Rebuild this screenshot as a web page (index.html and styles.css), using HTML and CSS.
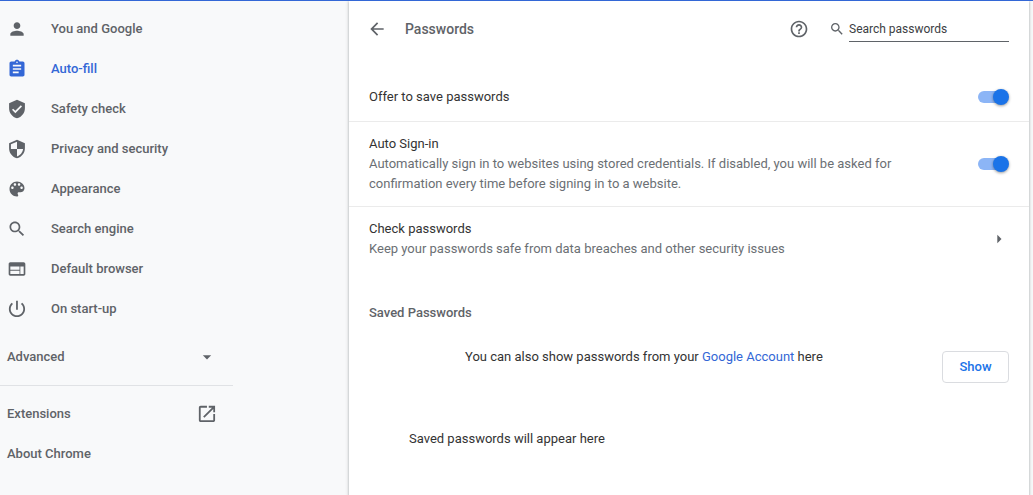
FILE: index.html
```html
<!DOCTYPE html>
<html lang="en-GB">
<head>
  <meta charset="UTF-8">
  <meta name="viewport" content="width=device-width, initial-scale=1.0">
  <title>Settings - Passwords</title>
  <link rel="stylesheet" href="styles.css">
</head>
<body>
  <nav class="sidebar">
    <a class="menu-item" href="#people">
      <svg class="icon" viewBox="0 0 24 24"><path d="M12 12c2.21 0 4-1.79 4-4s-1.79-4-4-4-4 1.79-4 4 1.79 4 4 4zm0 2c-2.67 0-8 1.34-8 4v2h16v-2c0-2.66-5.33-4-8-4z"/></svg>
      You and Google
    </a>
    <a class="menu-item selected" href="#autofill">
      <svg class="icon" viewBox="0 0 24 24"><path d="M19 3h-4.18C14.4 1.84 13.3 1 12 1c-1.3 0-2.4.84-2.82 2H5c-1.1 0-2 .9-2 2v14c0 1.1.9 2 2 2h14c1.1 0 2-.9 2-2V5c0-1.1-.9-2-2-2zm-7 0c.55 0 1 .45 1 1s-.45 1-1 1-1-.45-1-1 .45-1 1-1zm2 14H7v-2h7v2zm3-4H7v-2h10v2zm0-4H7V7h10v2z"/></svg>
      Auto-fill
    </a>
    <a class="menu-item" href="#safety">
      <svg class="icon" viewBox="0 0 24 24"><path d="M12 1L2.5 5v6c0 5.6 3.9 10.7 9.5 12 5.6-1.3 9.5-6.4 9.5-12V5L12 1zm-2 16l-4-4 1.41-1.41L10 14.17l6.59-6.59L18 9l-8 8z"/></svg>
      Safety check
    </a>
    <a class="menu-item" href="#privacy">
      <svg class="icon" viewBox="0 0 24 24"><path d="M12 1L2.5 5v6c0 5.6 3.9 10.7 9.5 12 5.6-1.3 9.5-6.4 9.5-12V5L12 1zm0 11h7.3c-.5 4.1-3.5 7.8-7.3 8.900V12H4.700V6.300L12 3.200V12z"/></svg>
      Privacy and security
    </a>
    <a class="menu-item" href="#appearance">
      <svg class="icon" viewBox="0 0 24 24"><path d="M12 3c-4.970 0-9 4.030-9 9s4.030 9 9 9c.83 0 1.500-.67 1.500-1.500 0-.39-.15-.74-.39-1.010-.23-.26-.38-.61-.38-.99 0-.83.67-1.500 1.500-1.500H16c2.760 0 5-2.240 5-5 0-4.420-4.030-8-9-8zm-5.500 9c-.83 0-1.500-.67-1.500-1.500S5.670 9 6.500 9 8 9.670 8 10.500 7.330 12 6.500 12zm3-4C8.670 8 8 7.330 8 6.500S8.670 5 9.500 5s1.500.67 1.500 1.500S10.330 8 9.500 8zm5 0c-.83 0-1.500-.67-1.500-1.500S13.670 5 14.500 5s1.500.67 1.500 1.500S15.330 8 14.500 8zm3 4c-.83 0-1.500-.67-1.500-1.500S16.670 9 17.500 9s1.500.67 1.500 1.500-.67 1.500-1.500 1.500z"/></svg>
      Appearance
    </a>
    <a class="menu-item" href="#search">
      <svg class="icon" viewBox="0 0 24 24"><path d="M15.5 14h-.79l-.28-.27C15.41 12.59 16 11.11 16 9.5 16 5.91 13.09 3 9.5 3S3 5.91 3 9.5 5.91 16 9.5 16c1.61 0 3.09-.59 4.23-1.57l.27.28v.79l5 4.99L20.49 19l-4.99-5zm-6 0C7.01 14 5 11.99 5 9.5S7.01 5 9.5 5 14 7.01 14 9.5 11.99 14 9.5 14z"/></svg>
      Search engine
    </a>
    <a class="menu-item" href="#browser">
      <svg class="icon" viewBox="0 0 24 24"><path d="M20 4H4c-1.1 0-1.99.9-1.99 2L2 18c0 1.1.9 2 2 2h16c1.1 0 2-.9 2-2V6c0-1.1-.9-2-2-2zm-5 14H4v-4h11v4zm0-5H4V9h11v4zm5 5h-4V9h4v9z"/></svg>
      Default browser
    </a>
    <a class="menu-item" href="#startup">
      <svg class="icon" viewBox="0 0 24 24"><path d="M13 3h-2v10h2V3zm4.83 2.17l-1.42 1.42C17.99 7.86 19 9.81 19 12c0 3.87-3.13 7-7 7s-7-3.13-7-7c0-2.19 1.01-4.14 2.58-5.42L6.17 5.17C4.23 6.82 3 9.26 3 12c0 4.97 4.03 9 9 9s9-4.03 9-9c0-2.74-1.23-5.18-3.17-6.83z" transform="translate(-1 -1) scale(1.08)"/></svg>
      On start-up
    </a>
    <button class="menu-item advanced" type="button">
      Advanced
      <svg class="icon" viewBox="0 0 24 24"><path d="M7 10l5 5 5-5z"/></svg>
    </button>
    <hr class="separator">
    <a class="menu-item spread" href="#extensions">
      Extensions
      <svg class="icon" viewBox="0 0 24 24"><path d="M19 19H5V5h7V3H5c-1.11 0-2 .9-2 2v14c0 1.1.89 2 2 2h14c1.1 0 2-.9 2-2v-7h-2v7zM14 3v2h3.59l-9.83 9.83 1.41 1.41L19 6.41V10h2V3h-7z" transform="translate(-1 -1) scale(1.08)"/></svg>
    </a>
    <a class="menu-item" href="#about">About Chrome</a>
  </nav>

  <main class="content">
    <header class="page-header">
      <button class="icon-button" type="button" aria-label="Back">
        <svg class="icon" viewBox="0 0 24 24"><path d="M20 11H7.83l5.59-5.59L12 4l-8 8 8 8 1.41-1.41L7.83 13H20v-2z"/></svg>
      </button>
      <h1>Passwords</h1>
      <button class="icon-button" type="button" aria-label="Help">
        <svg class="icon" viewBox="0 0 24 24"><path d="M11 18h2v-2h-2v2zm1-16C6.48 2 2 6.48 2 12s4.48 10 10 10 10-4.48 10-10S17.52 2 12 2zm0 18c-4.41 0-8-3.59-8-8s3.59-8 8-8 8 3.59 8 8-3.59 8-8 8zm0-14c-2.21 0-4 1.79-4 4h2c0-1.1.9-2 2-2s2 .9 2 2c0 2-3 1.75-3 5h2c0-2.25 3-2.5 3-5 0-2.21-1.79-4-4-4z"/></svg>
      </button>
      <div class="search">
        <svg class="icon small" viewBox="0 0 24 24"><path d="M15.5 14h-.79l-.28-.27C15.41 12.59 16 11.11 16 9.5 16 5.91 13.09 3 9.5 3S3 5.91 3 9.5 5.91 16 9.5 16c1.61 0 3.09-.59 4.23-1.57l.27.28v.79l5 4.99L20.49 19l-4.99-5zm-6 0C7.01 14 5 11.99 5 9.5S7.01 5 9.5 5 14 7.01 14 9.5 11.99 14 9.5 14z"/></svg>
        <input type="text" placeholder="Search passwords" aria-label="Search passwords">
      </div>
    </header>

    <div class="row">
      <label class="row-text" for="offerSave">Offer to save passwords</label>
      <input class="toggle" type="checkbox" id="offerSave" checked>
    </div>
    <div class="row">
      <label class="row-text" for="autoSignin">
        Auto Sign-in
        <span class="secondary">Automatically sign in to websites using stored credentials. If disabled, you will be asked for confirmation every time before signing in to a website.</span>
      </label>
      <input class="toggle" type="checkbox" id="autoSignin" checked>
    </div>
    <a class="row" href="#check">
      <span class="row-text">
        Check passwords
        <span class="secondary">Keep your passwords safe from data breaches and other security issues</span>
      </span>
      <svg class="icon" viewBox="0 0 24 24"><path d="M10 7l5 5-5 5z"/></svg>
    </a>

    <h2>Saved Passwords</h2>
    <div class="account">
      <p>You can also show passwords from your <a href="#account">Google Account</a> here</p>
      <button class="show-button" type="button">Show</button>
    </div>
    <p class="empty">Saved passwords will appear here</p>
  </main>
</body>
</html>
```
FILE: styles.css
```css
* {
  box-sizing: border-box;
}

body {
  margin: 0;
  min-height: 100vh;
  display: flex;
  border-top: 1px solid #3367d6;
  background: #f8f9fa;
  color: #333;
  font-family: Roboto, "Liberation Sans", sans-serif;
  font-size: 13px;
  line-height: 20px;
}

a {
  color: #3367d6;
  text-decoration: none;
}

button {
  font: inherit;
  cursor: pointer;
}

.icon {
  width: 20px;
  height: 20px;
  flex: none;
  fill: #5f6368;
}

.icon.small {
  width: 16px;
  height: 16px;
}

/* sidebar */
.sidebar {
  width: 233px;
  flex: none;
  margin-right: 116px;
  padding-top: 8px;
}

.menu-item {
  display: flex;
  align-items: center;
  gap: 24px;
  width: 100%;
  height: 40px;
  padding: 0 16px 0 7px;
  border: none;
  background: none;
  color: #5f6368;
  font-weight: 500;
}

.menu-item.selected {
  color: #3367d6;
}

.menu-item.selected .icon {
  fill: #3367d6;
}

.menu-item.advanced {
  margin-top: 8px;
}

.advanced,
.spread {
  justify-content: space-between;
}

.separator {
  margin: 8px 0;
  border: none;
  border-top: 1px solid #e0e2e5;
}

/* main panel */
.content {
  flex: 1;
  min-width: 0;
  margin-right: 4px;
  background: #fff;
  box-shadow: 0 1px 2px rgba(60, 64, 67, 0.3), 0 1px 3px 1px rgba(60, 64, 67, 0.15);
}

.page-header {
  display: flex;
  align-items: center;
  height: 56px;
  margin-bottom: 16px;
  padding: 0 20px 0 18px;
}

.page-header h1 {
  flex: 1;
  margin: 0 0 0 18px;
  color: #5f6368;
  font-size: 14px;
  font-weight: 500;
}

.icon-button {
  display: flex;
  padding: 0;
  border: none;
  background: none;
}

.search {
  display: flex;
  align-items: center;
  gap: 4px;
  margin-left: 20px;
}

.search input {
  width: 160px;
  height: 26px;
  padding: 0;
  border: none;
  border-bottom: 1px solid #5f6368;
  outline: none;
  background: none;
  color: #333;
  font: inherit;
  font-size: 12px;
}

.search input::placeholder {
  color: #3c4043;
}

.row {
  display: flex;
  align-items: center;
  min-height: 48px;
  padding: 12px 20px;
  color: #333;
}

.row + .row {
  border-top: 1px solid #ebebeb;
}

.row-text {
  flex: 1;
  padding-right: 64px;
}

.secondary {
  display: block;
  color: #6b6f74;
}

.toggle {
  appearance: none;
  display: flex;
  align-items: center;
  width: 28px;
  height: 12px;
  margin: 0 3px 0 0;
  border-radius: 6px;
  background: #8cb5f6;
  cursor: pointer;
}

.toggle::before {
  content: "";
  flex: none;
  width: 16px;
  height: 16px;
  border-radius: 50%;
  background: #fff;
  box-shadow: 0 1px 3px rgba(0, 0, 0, 0.4);
}

.toggle:checked::before {
  margin-left: 15px;
  background: #1a73e8;
}

h2 {
  margin: 32px 20px 24px;
  color: #5f6368;
  font-size: 13px;
  font-weight: 500;
}

.account {
  display: flex;
  align-items: flex-start;
  justify-content: space-between;
  padding: 0 20px 0 116px;
}

.account p {
  margin: 0;
}

.show-button {
  min-width: 67px;
  height: 32px;
  margin-top: 4px;
  padding: 0 16px;
  border: 1px solid #dadce0;
  border-radius: 4px;
  background: #fff;
  color: #1a73e8;
  font-weight: 500;
}

.empty {
  margin: 46px 60px;
}
```
